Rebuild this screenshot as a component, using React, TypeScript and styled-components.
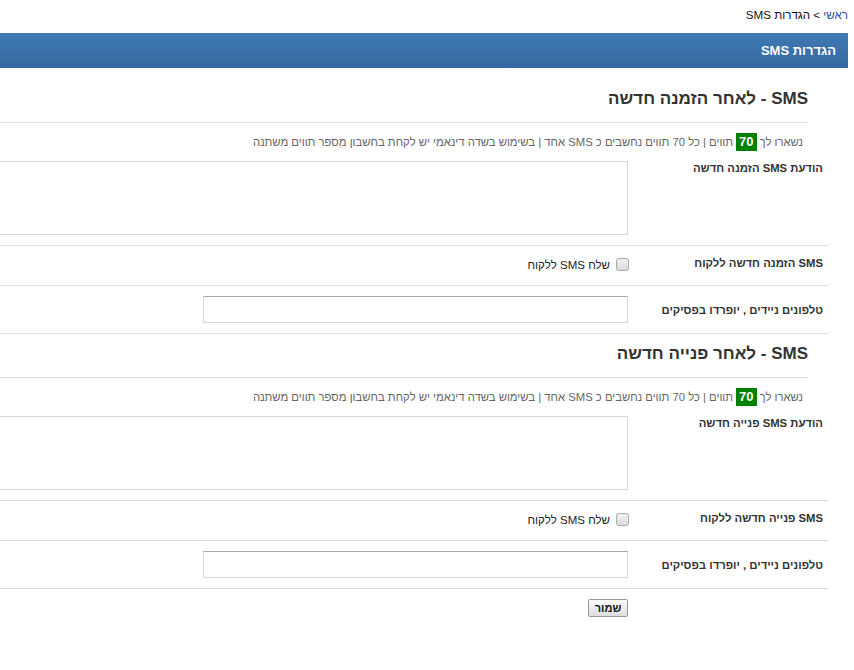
import React from "react";
import styled, { createGlobalStyle } from "styled-components";

const GlobalStyle = createGlobalStyle`
  html, body {
    margin: 0;
    padding: 0;
    background: #fff;
    direction: rtl;
  }
  body {
    font-family: "Liberation Sans", Arial, sans-serif;
    font-size: 12px;
    color: #333;
  }
`;

const Page = styled.div`
  width: 848px;
  margin-right: 6px;
  margin-left: auto;
  overflow: hidden;
  direction: rtl;
`;

const Breadcrumb = styled.div`
  height: 33px;
  line-height: 30px;
  font-size: 11.6px;
  color: #111;
  white-space: nowrap;

  a {
    color: #2b50a8;
    text-decoration: none;
  }
`;

const PageHeader = styled.div`
  height: 35px;
  line-height: 35px;
  padding-right: 12px;
  background: linear-gradient(to bottom, #3f7ab4 0%, #3668a0 100%);
  color: #fff;
  font-weight: bold;
  font-size: 13px;
`;

const Content = styled.div`
  padding-top: 11px;
  margin-right: 20px;
  padding-bottom: 30px;
`;

const SectionTitle = styled.h2`
  margin: 0 20px 0 0;
  padding: 8px 0 11px;
  line-height: 24px;
  font-size: 17px;
  font-weight: bold;
  color: #333;
  border-bottom: 1px solid #ddd;
  white-space: nowrap;
`;

const Info = styled.div`
  margin: 10px 25px 10px 0;
  line-height: 18px;
  font-size: 11.3px;
  color: #666;
  white-space: nowrap;
`;

const Counter = styled.span`
  display: inline-block;
  background: #008000;
  color: #fff;
  font-weight: bold;
  font-size: 13px;
  line-height: 18px;
  padding: 0 3px;
  margin: 0 3px;
`;

// $top: the field starts right under the info line (textarea rows)
const Row = styled.div<{ $top?: boolean; $align?: string }>`
  display: flex;
  align-items: ${(p) => p.$align ?? "center"};
  min-height: 19px;
  padding: ${(p) => (p.$top ? "0 0 10px" : "10px 0")};
  border-bottom: 1px solid #ddd;
`;

const Label = styled.div`
  flex: 0 0 195px;
  padding-right: 5px;
  font-weight: bold;
  font-size: 11.3px;
  color: #333;
  line-height: 14px;
  white-space: nowrap;
`;

const Field = styled.div`
  flex: 0 0 628px;
  align-self: stretch;
  display: flex;
  align-items: center;
`;

const MessageBox = styled.textarea`
  width: 720px;
  height: 74px;
  box-sizing: border-box;
  border: 1px solid #d8d8d8;
  resize: none;
  margin: 0;
  flex: none;
  align-self: flex-start;
`;

const PhoneInput = styled.input`
  width: 425px;
  height: 27px;
  box-sizing: border-box;
  border: 1px solid #d8d8d8;
  border-top-color: #aaa;
  margin: 0;
`;

const CheckLabel = styled.label`
  display: flex;
  align-items: center;
  gap: 6px;
  font-size: 11.5px;
  line-height: 14px;
  color: #222;
  white-space: nowrap;
  margin-top: -2px;
`;

const Check = styled.input`
  appearance: none;
  width: 13px;
  height: 13px;
  margin: 0 -1px 0 0;
  border: 1px solid #a8a8a8;
  border-radius: 3px;
  background: linear-gradient(to bottom, #f2f2f2, #dcdcdc);
`;

const Actions = styled.div`
  display: flex;
  padding: 10px 200px 0 0;
`;

const SaveButton = styled.button`
  width: 40px;
  height: 18px;
  padding: 0;
  font-family: "Liberation Sans", Arial, sans-serif;
  font-size: 11px;
  font-weight: bold;
  color: #111;
  border: 1px solid #999;
  border-radius: 2px;
  background: linear-gradient(to bottom, #fbfbfb, #dedede);
`;

type SmsSection = {
  title: string;
  messageLabel: string;
  notifyLabel: string;
};

const sections: SmsSection[] = [
  {
    title: "SMS - לאחר הזמנה חדשה",
    messageLabel: "הודעת SMS הזמנה חדשה",
    notifyLabel: "SMS הזמנה חדשה ללקוח",
  },
  {
    title: "SMS - לאחר פנייה חדשה",
    messageLabel: "הודעת SMS פנייה חדשה",
    notifyLabel: "SMS פנייה חדשה ללקוח",
  },
];

const Section: React.FC<{ data: SmsSection }> = ({ data }) => (
  <>
    <SectionTitle>{data.title}</SectionTitle>
    <Info>
      נשארו לך<Counter>70</Counter>תווים | כל 70 תווים נחשבים כ SMS אחד | בשימוש
      בשדה דינאמי יש לקחת בחשבון מספר תווים משתנה
    </Info>
    <Row $top $align="flex-start">
      <Label>{data.messageLabel}</Label>
      <Field>
        <MessageBox />
      </Field>
    </Row>
    <Row $align="flex-start">
      <Label>{data.notifyLabel}</Label>
      <Field>
        <CheckLabel>
          <Check type="checkbox" />
          שלח SMS ללקוח
        </CheckLabel>
      </Field>
    </Row>
    <Row>
      <Label>טלפונים ניידים , יופרדו בפסיקים</Label>
      <Field>
        <PhoneInput type="text" />
      </Field>
    </Row>
  </>
);

export default function App() {
  return (
    <>
      <GlobalStyle />
      <Page>
        <Breadcrumb>
          <a href="#">ראשי</a> &gt; הגדרות SMS
        </Breadcrumb>
        <PageHeader>הגדרות SMS</PageHeader>
        <Content>
          {sections.map((s) => (
            <Section key={s.title} data={s} />
          ))}
          <Actions>
            <SaveButton>שמור</SaveButton>
          </Actions>
        </Content>
      </Page>
    </>
  );
}
